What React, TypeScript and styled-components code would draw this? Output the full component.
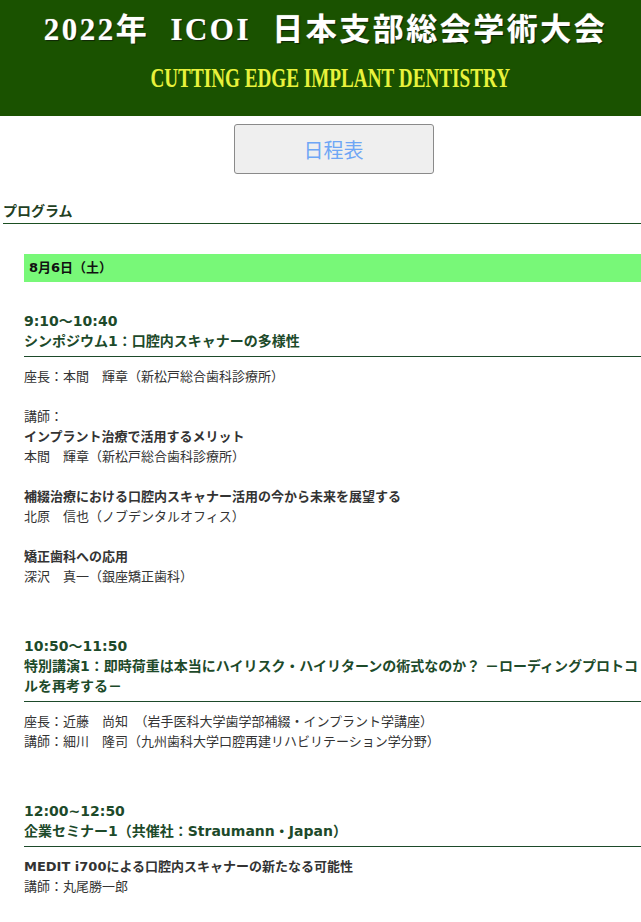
import React from "react";
import styled, { createGlobalStyle } from "styled-components";

const GlobalStyle = createGlobalStyle`
  html { overflow-x: hidden; }
  body {
    margin: 0;
    background: #ffffff;
    font-family: "DejaVu Sans", "Noto Sans CJK JP", sans-serif;
    color: #333333;
  }
`;

const Header = styled.header`
  height: 116px;
  background: #1a5200;
  display: flex;
  flex-direction: column;
  align-items: center;
  padding: 10px 0 0 10px;
  box-sizing: border-box;
`;

const Title = styled.h1`
  margin: 0;
  font-family: "Liberation Serif", "Noto Sans CJK JP", serif;
  font-weight: 700;
  font-size: 31px;
  line-height: 40px;
  letter-spacing: 2.5px;
  word-spacing: 11px;
  color: #ffffff;
  text-shadow: 1px 1px 1px rgba(0, 0, 0, 0.6), 0 0 1px rgba(255, 255, 255, 0.6);
  white-space: nowrap;
`;

const Subtitle = styled.div`
  margin: 13px 0 0 10px;
  font-family: "Liberation Serif", serif;
  font-weight: 700;
  font-size: 27px;
  line-height: 30px;
  color: #e8f23c;
  white-space: nowrap;
  transform: scaleX(0.71);
`;

const Page = styled.div`
  width: 667px;
`;

const ButtonRow = styled.div`
  display: flex;
  justify-content: center;
  padding-top: 8px;
`;

const ScheduleButton = styled.button`
  width: 200px;
  height: 50px;
  box-sizing: border-box;
  border: 1px solid #8a8a8a;
  border-radius: 3px;
  background: #efefef;
  color: #6ea6f5;
  font-family: "Noto Sans CJK JP", sans-serif;
  font-size: 20px;
  cursor: pointer;
`;

const Program = styled.section`
  margin: 27px 3px 0;
`;

const ProgramTitle = styled.h2`
  margin: 0;
  font-size: 14px;
  font-weight: 700;
  line-height: 20px;
  padding-bottom: 2px;
  color: #22401f;
  border-bottom: 1px solid #1b4f22;
`;

const Schedule = styled.div`
  padding: 0 20px 40px 21px;
`;

const DateBar = styled.div`
  margin-top: 30px;
  height: 28px;
  line-height: 28px;
  padding-left: 5px;
  background: #78f878;
  color: #111111;
  font-size: 13px;
  font-weight: 700;
`;

const Session = styled.div<{ $first?: boolean }>`
  margin-top: ${(p) => (p.$first ? "29px" : "49px")};
`;

const Time = styled.div`
  font-size: 14px;
  font-weight: 700;
  line-height: 20px;
  color: #1d4a2a;
`;

const SessionTitle = styled.div`
  font-size: 14px;
  font-weight: 700;
  line-height: 20px;
  color: #1d4a2a;
  padding-bottom: 5px;
  border-bottom: 1px solid #1d4a2a;
`;

const Body = styled.div`
  margin-top: 10px;
  display: flex;
  flex-direction: column;
  gap: 20px;
`;

const Group = styled.div`
  display: flex;
  flex-direction: column;
`;

const Line = styled.div<{ $bold?: boolean }>`
  font-size: 13px;
  line-height: 20px;
  color: #333333;
  font-weight: ${(p) => (p.$bold ? 700 : 400)};
  white-space: nowrap;
`;

type Item = { t: string; b?: boolean };
type SessionData = { time: string; title: string; groups: Item[][] };

const sessions: SessionData[] = [
  {
    time: "9:10～10:40",
    title: "シンポジウム1：口腔内スキャナーの多様性",
    groups: [
      [{ t: "座長：本間　輝章（新松戸総合歯科診療所）" }],
      [
        { t: "講師：" },
        { t: "インプラント治療で活用するメリット", b: true },
        { t: "本間　輝章（新松戸総合歯科診療所）" },
      ],
      [
        { t: "補綴治療における口腔内スキャナー活用の今から未来を展望する", b: true },
        { t: "北原　信也（ノブデンタルオフィス）" },
      ],
      [{ t: "矯正歯科への応用", b: true }, { t: "深沢　真一（銀座矯正歯科）" }],
    ],
  },
  {
    time: "10:50～11:50",
    title:
      "特別講演1：即時荷重は本当にハイリスク・ハイリターンの術式なのか？ －ローディングプロトコルを再考する－",
    groups: [
      [
        { t: "座長：近藤　尚知　（岩手医科大学歯学部補綴・インプラント学講座）" },
        { t: "講師：細川　隆司（九州歯科大学口腔再建リハビリテーション学分野）" },
      ],
    ],
  },
  {
    time: "12:00~12:50",
    title: "企業セミナー1（共催社：Straumann・Japan）",
    groups: [
      [
        { t: "MEDIT i700による口腔内スキャナーの新たなる可能性", b: true },
        { t: "講師：丸尾勝一郎" },
      ],
    ],
  },
];

export default function App() {
  return (
    <>
      <GlobalStyle />
      <Header>
        <Title>2022年 ICOI 日本支部総会学術大会</Title>
        <Subtitle>CUTTING EDGE IMPLANT DENTISTRY</Subtitle>
      </Header>
      <Page>
        <ButtonRow>
          <ScheduleButton type="button">日程表</ScheduleButton>
        </ButtonRow>
        <Program>
          <ProgramTitle>プログラム</ProgramTitle>
          <Schedule>
            <DateBar>8月6日（土）</DateBar>
            {sessions.map((s, i) => (
              <Session key={s.time} $first={i === 0}>
                <Time>{s.time}</Time>
                <SessionTitle>{s.title}</SessionTitle>
                <Body>
                  {s.groups.map((g, gi) => (
                    <Group key={gi}>
                      {g.map((it, ii) => (
                        <Line key={ii} $bold={it.b}>
                          {it.t}
                        </Line>
                      ))}
                    </Group>
                  ))}
                </Body>
              </Session>
            ))}
          </Schedule>
        </Program>
      </Page>
    </>
  );
}
